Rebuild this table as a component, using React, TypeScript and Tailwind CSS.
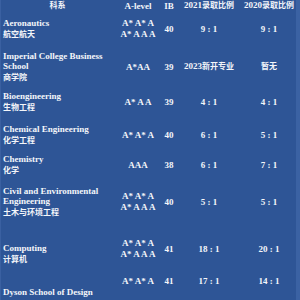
type Row = {
  name: string[];
  cn?: string;
  alevel: string[];
  ib: string;
  r2021: string;
  r2020: string;
  h: string;
  namePad?: string;
};

const rows: Row[] = [
  { name: ["Aeronautics"], cn: "航空航天", alevel: ["A* A* A", "A* A A A"], ib: "40", r2021: "9 : 1", r2020: "9 : 1", h: "h-[34px]" },
  { name: ["Imperial College Business", "School"], cn: "商学院", alevel: ["A*AA"], ib: "39", r2021: "2023新开专业", r2020: "暂无", h: "h-[42px]" },
  { name: ["Bioengineering"], cn: "生物工程", alevel: ["A* A A"], ib: "39", r2021: "4 : 1", r2020: "4 : 1", h: "h-[29px]" },
  { name: ["Chemical Engineering"], cn: "化学工程", alevel: ["A* A* A"], ib: "40", r2021: "6 : 1", r2020: "5 : 1", h: "h-[36px]" },
  { name: ["Chemistry"], cn: "化学", alevel: ["AAA"], ib: "38", r2021: "6 : 1", r2020: "7 : 1", h: "h-[25px]" },
  { name: ["Civil and Environmental", "Engineering"], cn: "土木与环境工程", alevel: ["A* A* A", "A* A A A"], ib: "40", r2021: "5 : 1", r2020: "5 : 1", h: "h-[48px]" },
  { name: ["Computing"], cn: "计算机", alevel: ["A* A* A", "A* A A A"], ib: "41", r2021: "18 : 1", r2020: "20 : 1", h: "h-[46px]", namePad: "pt-[11px]" },
  { name: ["Dyson School of Design"], alevel: ["A* A* A"], ib: "41", r2021: "17 : 1", r2020: "14 : 1", h: "h-[18px]", namePad: "pt-[22px]" },
];

// CJK glyphs sit a touch smaller than the latin text
function Cn({ children }: { children: string }) {
  return <span className="text-[8px]">{children}</span>;
}

function Ratio({ text }: { text: string }) {
  // split latin digits from chinese so sizes match the original
  const parts = text.split(/([\u4e00-\u9fff]+)/).filter(Boolean);
  return (
    <>
      {parts.map((p, i) =>
        /[\u4e00-\u9fff]/.test(p) ? <Cn key={i}>{p}</Cn> : <span key={i}>{p}</span>
      )}
    </>
  );
}

export default function App() {
  return (
    <div
      className="w-[300px] h-[300px] overflow-hidden bg-[#2e5596] text-[#f4f6fa] font-bold text-[9px] leading-[10.6px] border-l border-[#3a60a1] border-r-4 border-r-[#3b62a3]"
      style={{ fontFamily: '"Liberation Serif", "Noto Sans CJK SC", serif' }}
    >
      {/* header */}
      <div className="flex h-[12px] items-center whitespace-nowrap">
        <div className="w-[113px] text-center">
          <Cn>科系</Cn>
        </div>
        <div className="w-[48px] text-center">A-level</div>
        <div className="w-[14px] text-center">IB</div>
        <div className="w-[66px] text-center">
          2021<Cn>录取比例</Cn>
        </div>
        <div className="w-[54px] text-center">
          2020<Cn>录取比例</Cn>
        </div>
      </div>

      {rows.map((r, i) => (
        <div key={i} className={`flex items-center whitespace-nowrap ${r.h}`}>
          <div className={`w-[113px] pl-[2px] ${r.namePad ?? ""}`}>
            {r.name.map((n) => (
              <div key={n}>{n}</div>
            ))}
            {r.cn && (
              <div>
                <Cn>{r.cn}</Cn>
              </div>
            )}
          </div>
          <div className="w-[48px] text-center">
            {r.alevel.map((a, j) => (
              <div key={j}>{a}</div>
            ))}
          </div>
          <div className="w-[14px] text-center">{r.ib}</div>
          <div className="w-[66px] text-center">
            <Ratio text={r.r2021} />
          </div>
          <div className="w-[54px] text-center">
            <Ratio text={r.r2020} />
          </div>
        </div>
      ))}
    </div>
  );
}
